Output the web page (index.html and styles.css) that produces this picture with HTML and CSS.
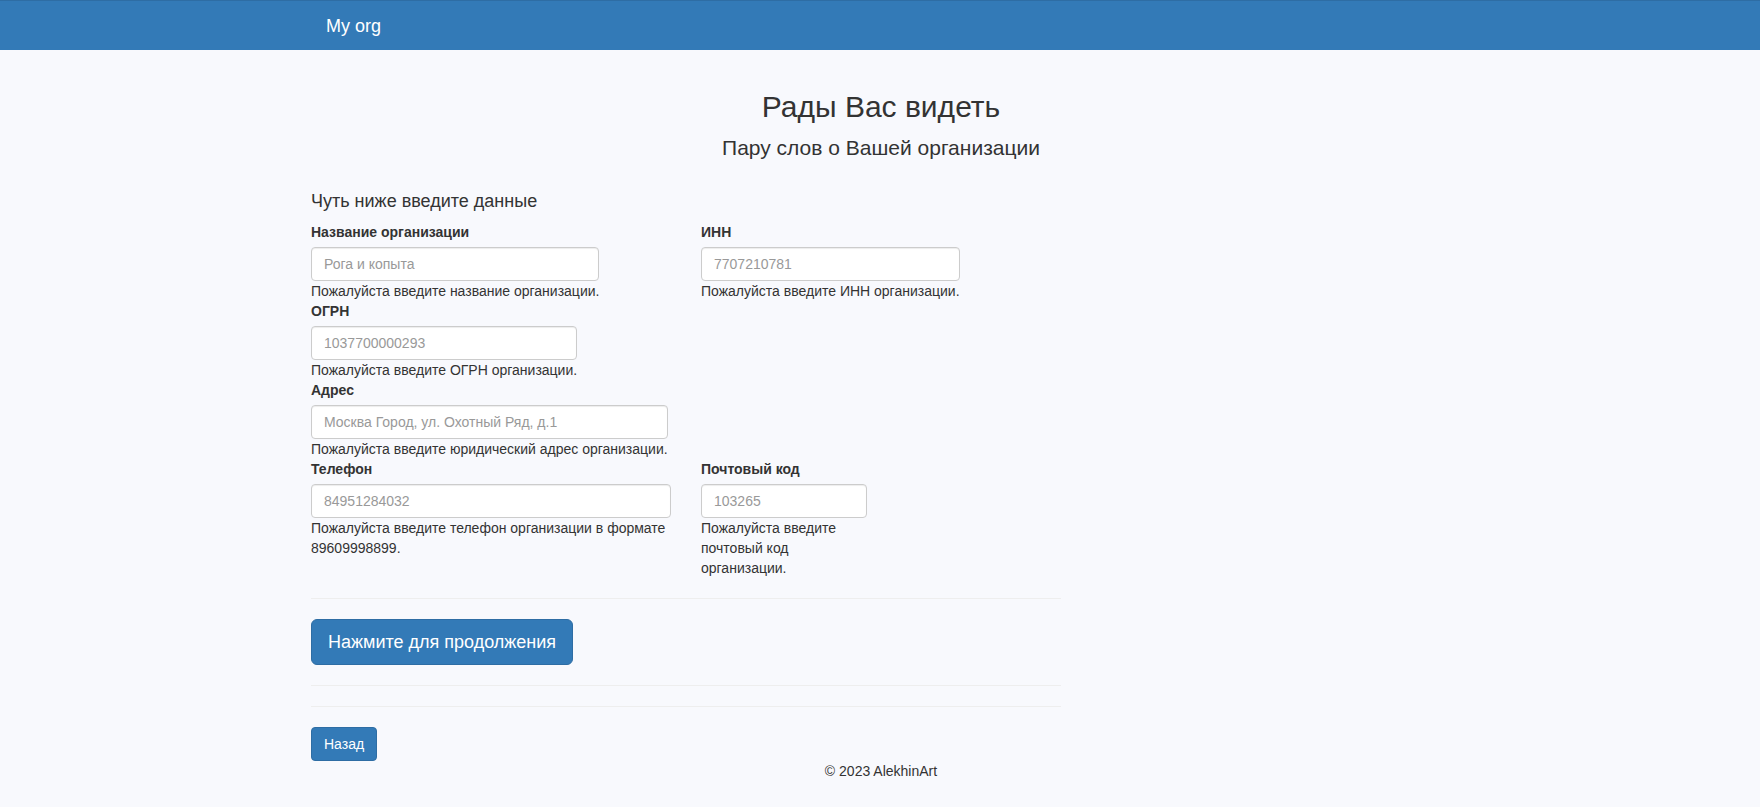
FILE: index.html
```html
<!DOCTYPE html>
<html lang="ru">
<head>
<meta charset="utf-8">
<title>My org</title>
<link rel="stylesheet" href="styles.css">
</head>
<body>
<nav class="navbar">
  <div class="container">
    <a class="brand" href="#">My org</a>
  </div>
</nav>
<main class="container">
  <div class="hero">
    <h1 class="hero-title">Рады Вас видеть</h1>
    <p class="hero-sub">Пару слов о Вашей организации</p>
  </div>
  <div class="main-col">
    <h4 class="form-title">Чуть ниже введите данные</h4>
    <form class="org-form">
      <div class="row">
        <div class="col">
          <div class="field">
            <label class="label">Название организации</label>
            <input class="input" type="text" placeholder="Рога и копыта">
            <div class="help">Пожалуйста введите название организации.</div>
          </div>
        </div>
        <div class="col">
          <div class="field">
            <label class="label">ИНН</label>
            <input class="input" type="text" placeholder="7707210781">
            <div class="help">Пожалуйста введите ИНН организации.</div>
          </div>
        </div>
      </div>
      <div class="row">
        <div class="col">
          <div class="field">
            <label class="label">ОГРН</label>
            <input class="input" type="text" placeholder="1037700000293">
            <div class="help">Пожалуйста введите ОГРН организации.</div>
          </div>
        </div>
      </div>
      <div class="row">
        <div class="col">
          <div class="field">
            <label class="label">Адрес</label>
            <input class="input" type="text" placeholder="Москва Город, ул. Охотный Ряд, д.1">
            <div class="help">Пожалуйста введите юридический адрес организации.</div>
          </div>
        </div>
      </div>
      <div class="row">
        <div class="col">
          <div class="field">
            <label class="label">Телефон</label>
            <input class="input" type="text" placeholder="84951284032">
            <div class="help">Пожалуйста введите телефон организации в формате 89609998899.</div>
          </div>
        </div>
        <div class="col">
          <div class="field field-narrow">
            <label class="label">Почтовый код</label>
            <input class="input" type="text" placeholder="103265">
            <div class="help">Пожалуйста введите почтовый код организации.</div>
          </div>
        </div>
      </div>
      <hr class="divider">
      <button class="btn btn-primary btn-lg" type="button">Нажмите для продолжения</button>
      <hr class="divider">
    </form>
    <hr class="divider">
    <button class="btn btn-primary" type="button">Назад</button>
  </div>
  <footer class="footer">© 2023 AlekhinArt</footer>
</main>
</body>
</html>
```

FILE: styles.css
```css
* { box-sizing: border-box; }

html, body {
  margin: 0;
  padding: 0;
}

body {
  background: #f8f9fd;
  color: #333;
  font-family: "Liberation Sans", Arial, Helvetica, sans-serif;
  font-size: 14px;
  line-height: 20px;
}

.container {
  width: 1170px;
  margin: 0 auto;
  padding: 0 14px 0 16px;
}

.navbar {
  height: 50px;
  background: #337ab7;
  border-top: 1px solid #2e6da4;
}

.navbar .container {
  display: flex;
  align-items: center;
  height: 49px;
}

.brand {
  color: #fff;
  font-size: 18px;
  line-height: 20px;
  text-decoration: none;
  padding: 0 15px;
}

.hero {
  text-align: center;
}

.hero-title {
  margin: 40px 0 0;
  font-size: 30px;
  font-weight: 400;
  line-height: 33px;
}

.hero-sub {
  margin: 14px 0 0;
  font-size: 21px;
  line-height: 22px;
}

.main-col {
  width: 750px;
}

.form-title {
  margin: 32px 0 11px;
  font-size: 18px;
  font-weight: 400;
  line-height: 20px;
}

.row {
  display: flex;
  gap: 30px;
}

.col {
  width: 360px;
  flex: 0 0 360px;
}

.field {
  display: flex;
  flex-direction: column;
  width: fit-content;
  max-width: 100%;
}

.field-narrow {
  width: 166px;
}

.label {
  font-weight: 700;
  margin-bottom: 5px;
}

.input {
  width: 100%;
  min-width: 0;
  height: 34px;
  padding: 6px 12px;
  font-family: inherit;
  font-size: 14px;
  line-height: 20px;
  color: #555;
  background: #fff;
  border: 1px solid #ccc;
  border-radius: 4px;
  box-shadow: inset 0 1px 1px rgba(0, 0, 0, .075);
}

.input::placeholder {
  color: #999;
}

.divider {
  margin: 20px 0;
  border: 0;
  border-top: 1px solid #eee;
  height: 0;
}

.btn {
  display: inline-block;
  font-family: inherit;
  font-size: 14px;
  line-height: 20px;
  padding: 6px 12px;
  border-radius: 4px;
  border: 1px solid transparent;
  cursor: pointer;
}

.btn-primary {
  color: #fff;
  background: #337ab7;
  border-color: #2e6da4;
}

.btn-lg {
  font-size: 18px;
  line-height: 24px;
  padding: 10px 16px;
  border-radius: 6px;
}

.footer {
  text-align: center;
  line-height: 20px;
  padding-bottom: 20px;
}
```
